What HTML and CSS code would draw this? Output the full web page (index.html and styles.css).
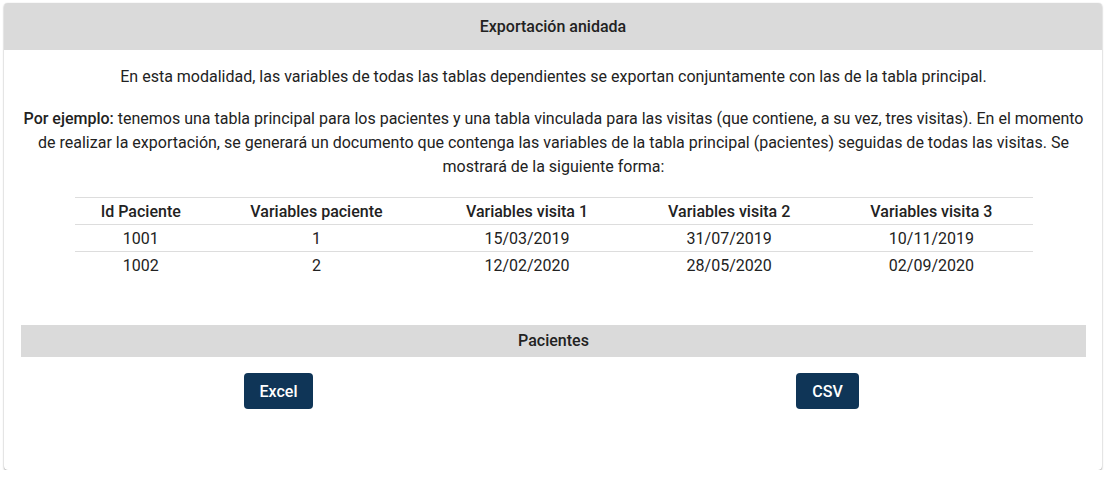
FILE: index.html
```html
<!DOCTYPE html>
<html lang="es">

<head>
    <meta charset="UTF-8">
    <title>Exportación anidada</title>
    <link rel="stylesheet" href="styles.css">
</head>

<body>
    <div class="card">
        <h2 class="card-titulo">Exportación anidada</h2>
        <div class="card-cuerpo">
            <p class="texto">En esta modalidad, las variables de todas las tablas dependientes se exportan conjuntamente con las de la tabla principal.</p>
            <p class="texto"><strong>Por ejemplo:</strong> tenemos una tabla principal para los pacientes y una tabla vinculada para las visitas (que contiene, a su vez, tres visitas). En el momento de realizar la exportación, se generará un documento que contenga las variables de la tabla principal (pacientes) seguidas de todas las visitas. Se mostrará de la siguiente forma:</p>

            <table class="ejemplo">
                <thead>
                    <tr>
                        <th>Id Paciente</th>
                        <th>Variables paciente</th>
                        <th>Variables visita 1</th>
                        <th>Variables visita 2</th>
                        <th>Variables visita 3</th>
                    </tr>
                </thead>
                <tbody>
                    <tr>
                        <td>1001</td>
                        <td>1</td>
                        <td>15/03/2019</td>
                        <td>31/07/2019</td>
                        <td>10/11/2019</td>
                    </tr>
                    <tr>
                        <td>1002</td>
                        <td>2</td>
                        <td>12/02/2020</td>
                        <td>28/05/2020</td>
                        <td>02/09/2020</td>
                    </tr>
                </tbody>
            </table>

            <h3 class="seccion">Pacientes</h3>
        </div>
        <div class="botones">
            <div class="col"><button class="boton">Excel</button></div>
            <div class="col"><button class="boton">CSV</button></div>
        </div>
    </div>
</body>

</html>
```

FILE: styles.css
```css
body {
    margin: 0;
    padding: 3px 6px 0 4px;
    background-color: #fff;
    font-family: Roboto, "Liberation Sans", sans-serif;
    font-size: 16px;
    color: #222;
}

.card {
    background-color: #fff;
    border-radius: 4px;
    box-shadow: 0 1px 2px rgba(0, 0, 0, 0.35), 0 0 1px rgba(0, 0, 0, 0.15);
    height: 467px;
    overflow: hidden;
}

.card-titulo {
    margin: 0;
    background-color: #dadada;
    height: 47px;
    line-height: 47px;
    text-align: center;
    font-size: 16px;
    font-weight: 500;
}

.card-cuerpo {
    padding: 15px 16px 0 17px;
}

.texto {
    margin: 0 0 18px;
    line-height: 24px;
    text-align: center;
}

.texto strong {
    font-weight: 500;
}

.ejemplo {
    width: 958px;
    margin: 13px auto 0;
    border-collapse: collapse;
    border-top: 1px solid #ddd;
}

.ejemplo th,
.ejemplo td {
    text-align: center;
    height: 26px;
    padding: 0;
    border-bottom: 1px solid #ddd;
}

.ejemplo th {
    font-weight: 500;
}

.ejemplo tbody tr:last-child td {
    border-bottom: none;
}

.seccion {
    margin: 47px 0 0;
    background-color: #dadada;
    height: 32px;
    line-height: 32px;
    text-align: center;
    font-size: 16px;
    font-weight: 500;
}

.botones {
    display: flex;
    padding-top: 16px;
}

.col {
    flex: 1;
    text-align: center;
}

.boton {
    background-color: #0f3557;
    color: #fff;
    border: none;
    border-radius: 4px;
    height: 36px;
    padding: 0 16px;
    font-family: Roboto, "Liberation Sans", sans-serif;
    font-size: 16px;
    font-weight: 500;
}
```
